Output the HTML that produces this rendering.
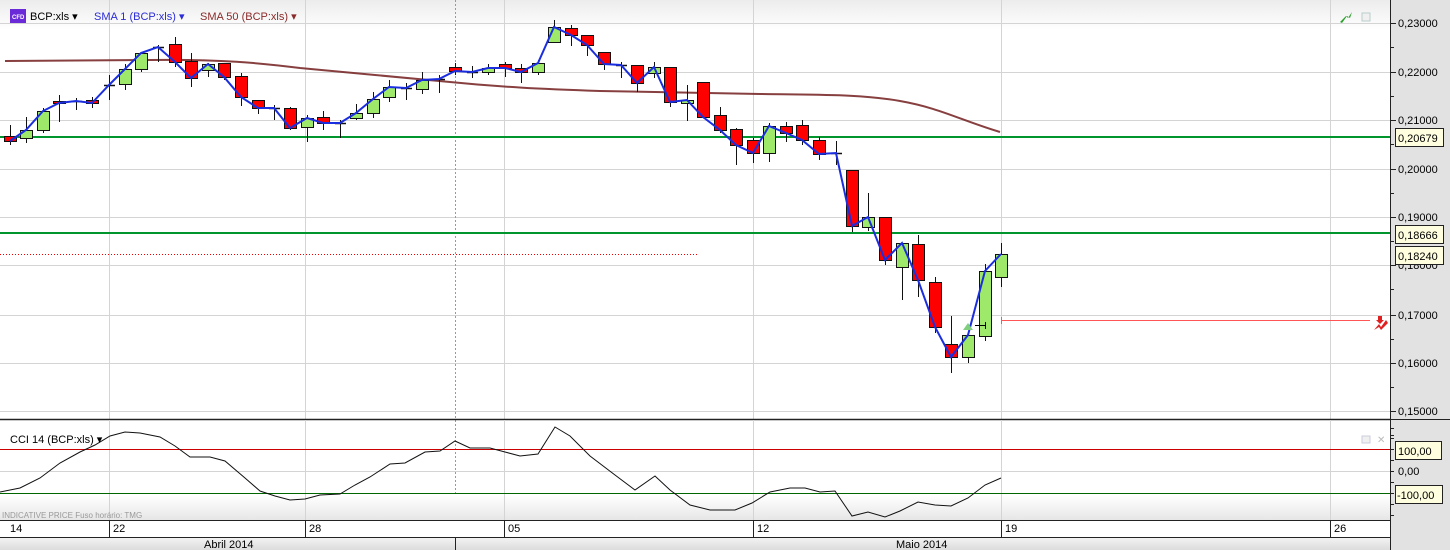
<!DOCTYPE html>
<html><head><meta charset="utf-8"><style>
html,body{margin:0;padding:0;background:#fff;width:1450px;height:550px;overflow:hidden;font-family:"Liberation Sans",sans-serif}
svg text{font-family:"Liberation Sans",sans-serif}
</style></head><body>
<svg id="s" width="1450" height="550" xmlns="http://www.w3.org/2000/svg">
<defs>
<linearGradient id="top" x1="0" y1="0" x2="0" y2="1"><stop offset="0" stop-color="#ececec"/><stop offset="1" stop-color="#fff"/></linearGradient>
<linearGradient id="bot" x1="0" y1="0" x2="0" y2="1"><stop offset="0" stop-color="#fff"/><stop offset="1" stop-color="#e6e6e6"/></linearGradient>
<linearGradient id="mon" x1="0" y1="0" x2="0" y2="1"><stop offset="0" stop-color="#f4f4f4"/><stop offset="1" stop-color="#dcdcdc"/></linearGradient>
</defs>
<rect x="0" y="0" width="1390" height="30" fill="url(#top)"/>
<rect x="1390" y="0" width="60" height="550" fill="#e2e2e2"/>
<g id="grid" stroke="#d4d4d4" stroke-width="1"></g>
<line x1="455.5" y1="0" x2="455.5" y2="520" stroke="#999" stroke-dasharray="2,2"/>
<!-- green lines -->
<line x1="0" y1="137" x2="1390" y2="137" stroke="#00962d" stroke-width="2"/>
<line x1="0" y1="233" x2="1390" y2="233" stroke="#00962d" stroke-width="2"/>
<line x1="0" y1="254.5" x2="698" y2="254.5" stroke="#e00" stroke-dasharray="1,2"/>
<line x1="1001" y1="320.5" x2="1370" y2="320.5" stroke="#f55"/>
<line x1="1001.5" y1="317" x2="1001.5" y2="324" stroke="#f55"/>
<path d="M1000,132 C960,120 940,108 900,101 C860,94 820,95 760,94 C700,93 650,92 600,91 C540,89 500,87 450,82 C400,77 350,73 300,68 C260,63 220,59 150,60 C100,60 50,61 5,61" fill="none" stroke="#7a2a2a" stroke-width="2" opacity="0.9"/>
<g id="candles"></g>
<polyline id="sma" fill="none" stroke="#1a2ee0" stroke-width="2"/>
<path d="M963,330 L968,323 L973,330 Z" fill="#7fcf7f"/>
<line x1="975" y1="325.5" x2="985" y2="325.5" stroke="#000"/><line x1="985.5" y1="322" x2="985.5" y2="329" stroke="#000"/>
<!-- icons -->
<path d="M1340,22 L1346,16 L1348,18 L1352,12 L1350,18 L1347,16 L1342,23 Z" fill="#2aa02a"/>
<rect x="1362" y="13" width="8" height="8" fill="#f0f0f0" stroke="#bcc"/>
<path d="M1374,330 L1379,324 L1381,327 L1386,320 L1388,323 L1381,330 L1379,327 Z" fill="#e02020"/>
<path d="M1378,316 h4 v4 h2 l-4,4 l-4,-4 h2 Z" fill="#e02020"/>
<!-- legend -->
<rect x="10" y="9" width="16" height="14" fill="#6a2ad8"/>
<text x="12" y="19" font-size="6" fill="#fff" font-weight="bold">CFD</text>
<text x="30" y="20" font-size="11" fill="#000">BCP:xls ▾</text>
<text x="94" y="20" font-size="11" fill="#2c2cd8">SMA 1 (BCP:xls) ▾</text>
<text x="200" y="20" font-size="11" fill="#8a2a2a">SMA 50 (BCP:xls) ▾</text>
<!-- separator -->
<line x1="0" y1="419.5" x2="1390" y2="419.5" stroke="#222" stroke-width="1.5"/>
<line x1="1390" y1="419.5" x2="1450" y2="419.5" stroke="#222" stroke-width="1"/>
<!-- CCI panel -->
<rect x="0" y="496" width="1390" height="24" fill="url(#bot)"/>
<line x1="0" y1="471.5" x2="1390" y2="471.5" stroke="#d4d4d4"/>
<line x1="109.5" y1="420" x2="109.5" y2="520" stroke="#d4d4d4"/>
<line x1="305.5" y1="420" x2="305.5" y2="520" stroke="#d4d4d4"/>
<line x1="504.5" y1="420" x2="504.5" y2="520" stroke="#d4d4d4"/>
<line x1="753.5" y1="420" x2="753.5" y2="520" stroke="#d4d4d4"/>
<line x1="1001.5" y1="420" x2="1001.5" y2="520" stroke="#d4d4d4"/>
<line x1="1330.5" y1="420" x2="1330.5" y2="520" stroke="#d4d4d4"/>
<line x1="0" y1="449.5" x2="1390" y2="449.5" stroke="#c00"/>
<line x1="0" y1="493.5" x2="1390" y2="493.5" stroke="#060"/>
<polyline fill="none" stroke="#111" stroke-width="1" points="0,492 20,488 40,478 60,463 80,452 95,445 110,436 125,432 140,433 160,437 175,446 190,457 210,457 225,461 245,478 260,491 275,496 290,500 305,499 320,495 340,494 355,485 370,477 390,464 405,463 425,452 440,451 455,441 470,448 490,448 505,452 520,456 538,454 555,427 570,436 590,456 615,475 635,490 655,476 670,490 690,505 710,510 735,510 752,503 770,492 790,488 805,488 820,492 835,491 852,516 868,512 885,517 900,511 918,502 935,505 951,506 968,498 985,485 1001,478"/>
<text x="10" y="443" font-size="11" fill="#000">CCI 14 (BCP:xls) ▾</text>
<text x="2" y="518" font-size="8" fill="#999">INDICATIVE PRICE   Fuso horário: TMG</text>
<rect x="1362" y="436" width="8" height="7" fill="#f0f0f0" stroke="#ccd"/>
<text x="1377" y="443" font-size="10" fill="#bbb">✕</text>
<!-- date axis -->
<rect x="0" y="520" width="1390" height="17" fill="#fff"/>
<line x1="0" y1="520.5" x2="1390" y2="520.5" stroke="#222"/>
<rect x="0" y="537" width="1390" height="13" fill="url(#mon)"/>
<line x1="0" y1="537.5" x2="1390" y2="537.5" stroke="#222"/>
<g stroke="#222"><line x1="109.5" y1="520" x2="109.5" y2="537"/><line x1="305.5" y1="520" x2="305.5" y2="537"/><line x1="504.5" y1="520" x2="504.5" y2="537"/><line x1="753.5" y1="520" x2="753.5" y2="537"/><line x1="1001.5" y1="520" x2="1001.5" y2="537"/><line x1="1330.5" y1="520" x2="1330.5" y2="537"/><line x1="455.5" y1="537" x2="455.5" y2="550"/></g>
<g font-size="11" fill="#000"><text x="10" y="532">14</text><text x="113" y="532">22</text><text x="309" y="532">28</text><text x="508" y="532">05</text><text x="757" y="532">12</text><text x="1005" y="532">19</text><text x="1334" y="532">26</text>
<text x="204" y="548">Abril 2014</text><text x="896" y="548">Maio 2014</text></g>
<!-- right axis -->
<line x1="1390.5" y1="0" x2="1390.5" y2="550" stroke="#222"/>
<g id="ax" font-size="11" fill="#000"></g>
<g font-size="11" fill="#000">
<rect x="1395.5" y="128.5" width="48" height="18" fill="#ffffe0" stroke="#222"/><text x="1398" y="142">0,20679</text>
<rect x="1395.5" y="225.5" width="48" height="18" fill="#ffffe0" stroke="#222"/><text x="1398" y="239">0,18666</text>
<rect x="1395.5" y="246.5" width="48" height="18" fill="#ffffe0" stroke="#222"/><text x="1398" y="260">0,18240</text>
<rect x="1395.5" y="441.5" width="46" height="18" fill="#ffffe0" stroke="#222"/><text x="1398" y="455">100,00</text>
<rect x="1395.5" y="485.5" width="47" height="18" fill="#ffffe0" stroke="#222"/><text x="1397" y="499">-100,00</text>
</g>
</svg>
<script>
var NS="http://www.w3.org/2000/svg",s=document.getElementById('s');
function el(t,a,p){var e=document.createElementNS(NS,t);for(var k in a)e.setAttribute(k,a[k]);(p||s).appendChild(e);return e;}
var g=document.getElementById('grid');
[23,72,120,169,217,265,315,363,411].forEach(function(y){el('line',{x1:0,y1:y+.5,x2:1390,y2:y+.5},g);});
[109,305,504,753,1001,1330].forEach(function(x){el('line',{x1:x+.5,y1:0,x2:x+.5,y2:419},g);});
var ax=document.getElementById('ax');
var labs=["0,23000","0,22000","0,21000","0,20000","0,19000","0,18000","0,17000","0,16000","0,15000"];
[23,72,120,169,217,265,315,363,411].forEach(function(y,i){el('line',{x1:1390,y1:y+.5,x2:1396,y2:y+.5,stroke:'#222'},ax);var t=el('text',{x:1398,y:y+4},ax);t.textContent=labs[i];el('line',{x1:1390,y1:y+24.5,x2:1394,y2:y+24.5,stroke:'#222'},ax);});
[428,438,449,460,471,482,493,504,515].forEach(function(y){el('line',{x1:1390,y1:y+.5,x2:1394,y2:y+.5,stroke:'#222'},ax);});
var t0=el('text',{x:1398,y:475},ax);t0.textContent="0,00";
// x, bodyTop, bodyBot, wickTop, wickBot, color(r/g/d)
var C=[[10,136,141,125,145,'r'],[26,130,138,117,143,'g'],[43,111,130,108,133,'g'],[59,101,103,95,122,'r'],[76,101,101,98,110,'d'],[92,100,103,97,108,'r'],[109,85,85,75,100,'d'],[125,69,84,64,90,'g'],[141,53,69,52,72,'g'],[158,47,47,45,62,'d'],[175,44,62,37,67,'r'],[191,61,78,53,87,'r'],[208,64,70,63,77,'g'],[224,63,77,63,80,'r'],[241,76,97,73,106,'r'],[258,100,108,100,114,'r'],[274,108,108,105,120,'d'],[290,108,128,107,130,'r'],[307,118,127,115,142,'g'],[323,117,123,111,130,'r'],[340,123,123,120,138,'d'],[356,113,118,104,120,'g'],[373,99,113,92,118,'g'],[389,87,97,80,102,'g'],[406,88,88,83,100,'d'],[422,80,89,72,94,'g'],[439,79,79,75,93,'d'],[455,67,71,63,75,'r'],[472,72,72,66,78,'d'],[488,68,72,64,75,'g'],[505,64,68,62,77,'r'],[521,68,72,64,83,'r'],[538,63,72,60,75,'g'],[554,27,42,20,43,'g'],[571,28,35,25,46,'r'],[587,35,45,35,56,'r'],[604,52,64,52,70,'r'],[621,65,65,62,78,'d'],[637,65,83,65,92,'r'],[654,67,73,62,78,'g'],[670,67,102,67,107,'r'],[687,100,103,85,121,'g'],[703,82,117,82,118,'r'],[720,115,130,107,133,'r'],[736,129,145,128,165,'r'],[753,140,153,138,163,'r'],[769,126,153,123,162,'g'],[786,126,133,122,142,'r'],[802,125,140,120,145,'r'],[819,140,154,137,160,'r'],[836,153,153,141,165,'d'],[852,170,226,170,232,'r'],[868,217,227,193,231,'g'],[885,217,260,217,265,'r'],[902,243,267,243,300,'g'],[918,244,280,235,297,'r'],[935,282,327,277,333,'r'],[951,344,357,316,373,'r'],[968,335,357,335,363,'g'],[985,271,336,264,341,'g'],[1001,254,277,243,287,'g']];
var cg=document.getElementById('candles'),pts=[];
C.forEach(function(c){var x=c[0];el('line',{x1:x+.5,y1:c[3],x2:x+.5,y2:c[4],stroke:'#111'},cg);
if(c[5]=='d'){el('line',{x1:x-5,y1:c[1]+.5,x2:x+6,y2:c[1]+.5,stroke:'#111','stroke-width':1.5},cg);pts.push(x+','+c[1]);}
else{el('rect',{x:x-5.5,y:c[1]+.5,width:12,height:Math.max(c[2]-c[1],2),fill:c[5]=='r'?'#f00':'#9ee86a',stroke:'#111'},cg);pts.push(x+','+(c[5]=='r'?c[2]:c[1]));}});
document.getElementById('sma').setAttribute('points',pts.join(' '));
</script>
</body></html>
